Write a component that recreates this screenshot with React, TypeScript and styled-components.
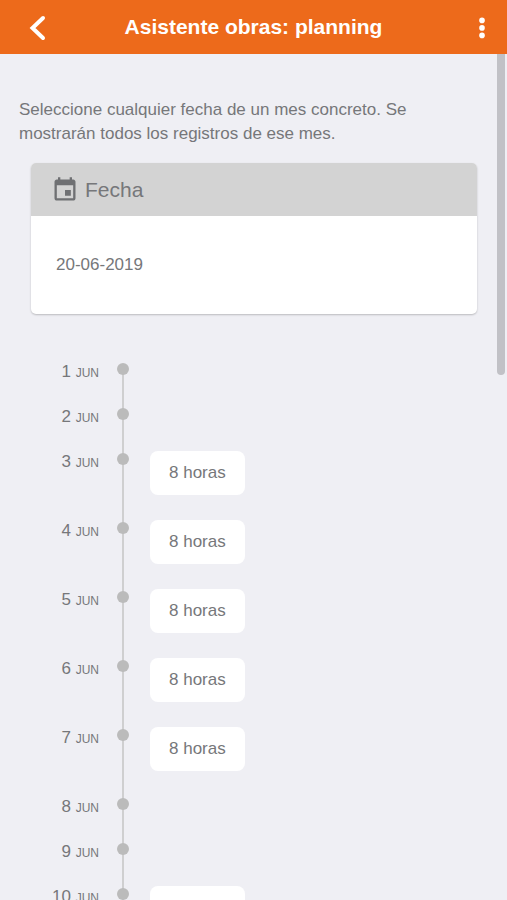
import React from "react";
import styled, { createGlobalStyle } from "styled-components";

const GlobalStyle = createGlobalStyle`
  * { box-sizing: border-box; }
  body {
    margin: 0;
    background: #efeff4;
    color: #76777a;
    font-family: "Liberation Sans", Arial, sans-serif;
    font-size: 17px;
  }
  button, input { font: inherit; color: inherit; }
`;

const Screen = styled.div`
  display: flex;
  flex-direction: column;
  height: 100vh;
`;

const Toolbar = styled.header`
  display: flex;
  align-items: center;
  justify-content: space-between;
  flex: none;
  height: 54px;
  padding: 0 12px 0 24px;
  background: #ed6a1b;
  color: #fff;
`;

const Title = styled.h1`
  flex: 1;
  margin: 0;
  padding-right: 12px;
  text-align: center;
  font-size: 21px;
  line-height: 24px;
  font-weight: 700;
`;

const IconButton = styled.button`
  display: flex;
  align-items: center;
  justify-content: center;
  width: 26px;
  height: 40px;
  padding: 0;
  border: 0;
  background: none;
  cursor: pointer;
`;

const Viewport = styled.div`
  position: relative;
  flex: 1;
  min-height: 0;
`;

const Content = styled.main`
  height: 100%;
  overflow-y: auto;
  padding: 44px 30px 0 31px;
  scrollbar-width: none;
`;

const ScrollThumb = styled.div`
  position: absolute;
  top: 0;
  right: 2px;
  width: 8px;
  height: 38%;
  border-radius: 0 0 4px 4px;
  background: #c1c1c6;
`;

const Intro = styled.p`
  margin: 0 0 17px -12px;
  line-height: 24px;
`;

const Card = styled.section`
  overflow: hidden;
  border-radius: 5px;
  background: #fff;
  box-shadow: 0 1px 2px rgba(0, 0, 0, 0.22);
`;

const CardHeader = styled.label`
  display: flex;
  align-items: center;
  gap: 6px;
  height: 53px;
  padding: 0 20px;
  background: #d3d3d3;
  font-size: 21px;
  line-height: 24px;
`;

const DateInput = styled.input`
  display: block;
  width: 100%;
  height: 98px;
  padding: 0 25px;
  border: 0;
  background: none;
  outline: none;
`;

const Timeline = styled.ol`
  margin: 48px 0 0;
  padding: 0;
  list-style: none;
`;

const DayLabel = styled.div`
  text-align: right;
  line-height: 20px;
`;

const Month = styled.span`
  font-size: 12px;
`;

const Rail = styled.div`
  display: flex;
  flex-direction: column;
  align-items: center;
  padding-top: 1px;
  background: linear-gradient(#cfcfd0, #cfcfd0) center 0 / 2px 100% no-repeat;
`;

const Day = styled.li<{ $filled: boolean }>`
  display: grid;
  grid-template-columns: 68px 48px 1fr;
  height: ${(p) => (p.$filled ? 69 : 45)}px;

  &:first-child ${Rail} {
    background-position: center 7px;
  }
`;

const Dot = styled.div`
  width: 12px;
  height: 12px;
  border-radius: 50%;
  background: #bbb;
`;

const Hours = styled.div`
  justify-self: start;
  height: 44px;
  margin-top: -1px;
  padding: 0 19px;
  margin-left: 3px;
  border-radius: 8px;
  background: #fff;
  line-height: 44px;
`;

const days = Array.from({ length: 10 }, (_, i) => {
  const day = i + 1;
  const weekend = [1, 2, 8, 9].includes(day);
  return { day, hours: weekend ? 0 : 8 };
});

export default function App() {
  return (
    <Screen>
      <GlobalStyle />
      <Toolbar>
        <IconButton aria-label="Volver">
          <svg width="26" height="30" viewBox="0 0 26 30" fill="none">
            <path d="M19 6 L8.5 16 L19 26" stroke="#fff" strokeWidth="4" strokeLinecap="round" />
          </svg>
        </IconButton>
        <Title>Asistente obras: planning</Title>
        <IconButton aria-label="Más opciones">
          <svg width="26" height="24" viewBox="0 0 26 24" fill="#fff">
            <circle cx="13" cy="5.4" r="2.8" />
            <circle cx="13" cy="12.9" r="2.8" />
            <circle cx="13" cy="20.4" r="2.8" />
          </svg>
        </IconButton>
      </Toolbar>
      <Viewport>
        <Content>
          <Intro>
            Seleccione cualquier fecha de un mes concreto. Se mostrarán todos los registros de ese mes.
          </Intro>
          <Card>
            <CardHeader htmlFor="fecha">
              <svg width="28" height="28" viewBox="0 0 24 24" fill="#6f7073">
                <path d="M17 12h-5v5h5v-5zM16 1v2H8V1H6v2H5c-1.11 0-1.99.9-1.99 2L3 19c0 1.1.89 2 2 2h14c1.1 0 2-.9 2-2V5c0-1.1-.9-2-2-2h-1V1h-2zm3 18H5V8h14v11z" />
              </svg>
              Fecha
            </CardHeader>
            <DateInput id="fecha" type="text" defaultValue="20-06-2019" />
          </Card>
          <Timeline>
            {days.map(({ day, hours }) => (
              <Day key={day} $filled={hours > 0}>
                <DayLabel>
                  {day} <Month>JUN</Month>
                </DayLabel>
                <Rail>
                  <Dot />
                </Rail>
                {hours > 0 && <Hours>{hours} horas</Hours>}
              </Day>
            ))}
          </Timeline>
        </Content>
        <ScrollThumb />
      </Viewport>
    </Screen>
  );
}
